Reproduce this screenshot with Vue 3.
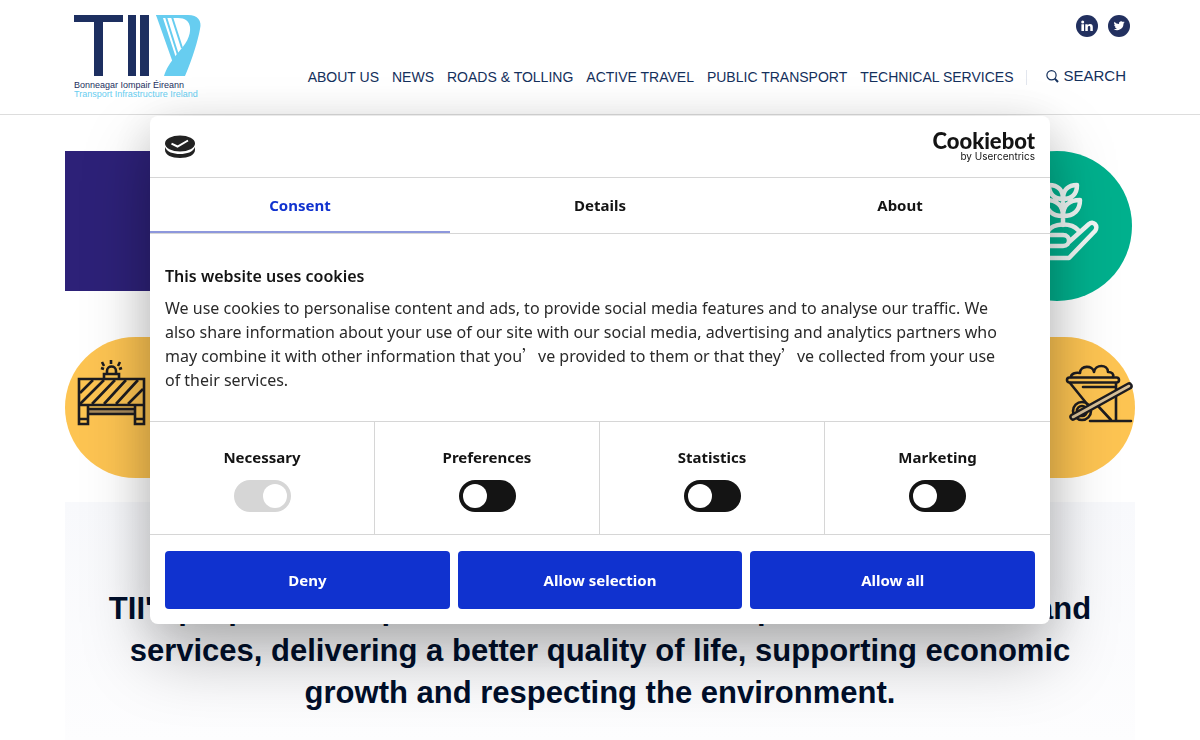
<script setup>
import { ref, reactive } from 'vue'

const links = ['About us', 'News', 'Roads & Tolling', 'Active Travel', 'Public Transport', 'Technical Services']
const tabs = ['Consent', 'Details', 'About']
const activeTab = ref('Consent')
const categories = reactive([
  { id: 'necessary', name: 'Necessary', on: true, locked: true },
  { id: 'preferences', name: 'Preferences', on: false, locked: false },
  { id: 'statistics', name: 'Statistics', on: false, locked: false },
  { id: 'marketing', name: 'Marketing', on: false, locked: false },
])
const actions = ['Deny', 'Allow selection', 'Allow all']
</script>

<template>
  <div class="page">
    <header class="site-header">
      <div class="container header-inner">
        <a href="#" class="logo" aria-label="TII home">
          <svg width="128" height="86" viewBox="0 0 128 86">
            <path fill="#1d2f60" d="M0 0h49v7H29v54h-9V7H0zM54 0h8v61h-8zM66 0h9v61h-9z" />
            <path fill="#67cdf0" d="M82 0H114C124 0 128 6 126 14C124 25 119 42 111 61H90C92 54 96 48 103 39C112 29 117 21 116 12C115 6 111 3 104 3H84z" />
            <path fill="#67cdf0" d="M82 0H88L102 43L99 48z" />
            <path fill="none" stroke="#67cdf0" stroke-width="2" d="M92 2L104 40M98 2L108 33" />
            <text x="0" y="73" font-size="9" fill="#1d2f60">Bonneagar Iompair Éireann</text>
            <text x="0" y="82" font-size="9" fill="#67cdf0">Transport Infrastructure Ireland</text>
          </svg>
        </a>
        <div class="header-right">
          <div class="social">
            <a href="#" aria-label="LinkedIn">
              <svg width="22" height="22" viewBox="0 0 22 22">
                <circle cx="11" cy="11" r="11" fill="#22305f" />
                <circle cx="6.700" cy="7" r="1.500" fill="#fff" />
                <path fill="#fff" d="M5.400 9.300H8V16H5.400zM9.300 9.300h2.400v1c.5-.8 1.300-1.200 2.300-1.200 2 0 2.800 1.200 2.800 3.200V16h-2.500v-3.400c0-1-.3-1.600-1.100-1.600-.9 0-1.400.6-1.400 1.600V16H9.300z" />
              </svg>
            </a>
            <a href="#" aria-label="Twitter">
              <svg width="22" height="22" viewBox="0 0 22 22">
                <circle cx="11" cy="11" r="11" fill="#22305f" />
                <path transform="translate(5.600 5.200) scale(.46)" fill="#fff" d="M24 4.600a10 10 0 0 1-2.800.8 5 5 0 0 0 2.100-2.700 10 10 0 0 1-3.100 1.200 4.900 4.900 0 0 0-8.400 4.500A14 14 0 0 1 1.700 3.200a4.900 4.900 0 0 0 1.500 6.500 5 5 0 0 1-2.200-.6v.1a4.900 4.900 0 0 0 3.900 4.800 5 5 0 0 1-2.200.1 4.900 4.900 0 0 0 4.600 3.400A9.900 9.900 0 0 1 0 19.500 14 14 0 0 0 21.500 7.100 10 10 0 0 0 24 4.600z" />
              </svg>
            </a>
          </div>
          <nav class="nav">
            <a v-for="l in links" :key="l" href="#">{{ l }}</a>
            <button type="button" class="search">
              <svg width="13" height="13" viewBox="0 0 13 13" fill="none" stroke="#14305c">
                <circle cx="5.500" cy="5.200" r="4.600" stroke-width="1.200" />
                <path d="M8.800 8.600L12 12" stroke-width="2" />
              </svg>
              Search
            </button>
          </nav>
        </div>
      </div>
    </header>

    <main class="container main">
      <div class="row first">
        <div class="block"></div>
        <div class="disc">
          <svg width="90" height="84" viewBox="0 0 90 84" fill="none" stroke="#f1f7f5" stroke-width="4.500" stroke-linecap="round" stroke-linejoin="round">
            <path d="M43 44V14M43 18C43 9 48 4 57 4C57 13 52 18 43 18ZM43 18C43 9 38 4 29 4C29 13 34 18 43 18ZM43 35C43 25 49 19 60 19C60 29 54 35 43 35ZM43 35C43 25 37 19 26 19C26 29 32 35 43 35Z" />
            <path d="M28 50C33 42 51 41 58 49" />
            <path d="M10 62L22 54H43C51 54 51 65 43 65H24M49 61L69 43C73 39 79 45 75 50L49 77H10" />
          </svg>
        </div>
      </div>
      <div class="row">
        <div class="pill left">
          <svg width="70" height="68" viewBox="0 0 70 68" fill="none" stroke="#1d1c20" stroke-width="2.600">
            <path fill="#a98b5c" stroke="none" d="M11 51h46v4H11z" />
            <path d="M2 20H67V46H2zM2 46h9v19H2zM58 46h9v19h-9zM2 60h9M58 60h9M11 50h47M11 55h47M27 20v-5h15v5M30 15v-3c0-6 9-6 9 0v3M34 1v4M25 3l2 4M43 3l-2 4M24 9l3 1M45 9l-3 1" />
            <path d="M3 34L16 21M3 45L27 21M15 45L38 21M27 45L49 21M39 45L61 21M51 45L66 30" />
          </svg>
        </div>
        <div class="pill right">
          <svg width="70" height="62" viewBox="0 0 70 62" fill="none" stroke="#1d1c20" stroke-width="2.600" stroke-linecap="round" stroke-linejoin="round">
            <path d="M6 13C6 10 10 8 15 9C15 1 28 1 29 8C30 0 43 0 43 8C47 8 49 10 48 13" />
            <rect x="2" y="13.500" width="52" height="5" rx="2.500" />
            <path d="M5 19L22 40M51 19V56M18 23H51M33 42L46 56M25 57H66" />
            <circle cx="17" cy="47" r="9" />
            <circle cx="17" cy="47" r="5" />
            <path stroke-width="7.500" d="M8 53L64 22" />
            <path stroke="#d8c097" d="M8 53L64 22" />
          </svg>
        </div>
      </div>
      <section class="purpose">
        <h2>TII's purpose is to provide sustainable transport infrastructure and services, delivering a better quality of life, supporting economic growth and respecting the environment.</h2>
      </section>
    </main>

    <div class="overlay">
      <div class="dialog" role="dialog" aria-labelledby="cookie-title">
        <div class="dialog-head">
          <svg width="30" height="24" viewBox="0 0 30 24">
            <path fill="#222" d="M0 12c2 5 8 7 15 7S28 17 30 12v3c0 5-6.700 8-15 8S0 20 0 15z" />
            <ellipse cx="15" cy="8.500" rx="15" ry="8" fill="#222" />
            <path fill="none" stroke="#fff" stroke-width="2" d="M6.500 8.700L12.500 11.500L23 5.500" />
          </svg>
          <a href="#" class="brand">
            <span class="brand-name">Cookiebot</span>
            <span class="brand-by">by Usercentrics</span>
          </a>
        </div>
        <div class="tabs" role="tablist">
          <button v-for="t in tabs" :key="t" type="button" role="tab" :aria-selected="t === activeTab" :class="{ active: t === activeTab }" @click="activeTab = t">{{ t }}</button>
        </div>
        <div class="copy">
          <h3 id="cookie-title">This website uses cookies</h3>
          <p>We use cookies to personalise content and ads, to provide social media features and to analyse our traffic. We also share information about your use of our site with our social media, advertising and analytics partners who may combine it with other information that you<span class="wide" lang="zh-CN">’</span>ve provided to them or that they<span class="wide" lang="zh-CN">’</span>ve collected from your use of their services.</p>
        </div>
        <div class="categories">
          <div v-for="c in categories" :key="c.id" class="category">
            <label :for="c.id">{{ c.name }}</label>
            <input :id="c.id" v-model="c.on" type="checkbox" :disabled="c.locked" />
          </div>
        </div>
        <div class="actions">
          <button v-for="a in actions" :key="a" type="button">{{ a }}</button>
        </div>
      </div>
    </div>
  </div>
</template>

<style>
html, body { background: #fff; }
body { overflow: hidden; }
</style>

<style scoped>
* { box-sizing: border-box; }
.page { font-family: "Liberation Sans", Arial, sans-serif; color: #000f2b; }
a { color: inherit; text-decoration: none; }
button { font: inherit; border: 0; background: none; padding: 0; cursor: pointer; }
svg { display: block; }
.container { max-width: 1070px; margin: 0 auto; }
.site-header { border-bottom: 1px solid #ddd; }
.header-inner { display: flex; justify-content: space-between; padding: 15px 9px 13px; }
.header-right { display: flex; flex-direction: column; align-items: flex-end; gap: 30px; }
.social { display: flex; gap: 10px; margin-right: -4px; }
.nav { display: flex; align-items: center; gap: 13px; font-size: 14px; line-height: 20px; text-transform: uppercase; color: #14305c; white-space: nowrap; }
.search { display: flex; align-items: center; gap: 4px; font-size: 15px; line-height: 12px; text-transform: uppercase; color: #14305c; border-left: 1px solid #e2e6ee; padding: 0 0 2px 19px; }
.main { padding-top: 36px; }
.row { display: flex; justify-content: space-between; align-items: flex-start; }
.first { margin-bottom: 36px; }
.block { width: 140px; height: 140px; background: #2d2178; }
.disc { width: 150px; height: 150px; border-radius: 50%; background: #00b08d; margin-right: 3px; padding: 30px 0 0 38px; }
.pill { width: 180px; height: 141px; border-radius: 71px; background: #fdc452; }
.left { padding: 22px 0 0 12px; }
.right { display: flex; justify-content: flex-end; padding: 27px 0 0; }
.purpose { margin-top: 24px; min-height: 240px; background: linear-gradient(#f8f9fc, #fdfdfe); padding: 86px 40px 24px; }
h2 { margin: 0; font-size: 31px; line-height: 42px; text-align: center; }

.overlay { position: fixed; inset: 0; display: flex; align-items: center; justify-content: center; }
.dialog { width: 75%; max-width: 900px; background: #fff; border-radius: 8px; box-shadow: 0 32px 68px rgba(0, 0, 0, .26), 0 8px 48px rgba(0, 0, 0, .12); font-family: "Noto Sans", "Open Sans", sans-serif; color: #141414; }
.dialog-head { display: flex; justify-content: space-between; align-items: center; height: 62px; padding: 0 15px; border-bottom: 1px solid #d6d6d6; }
.brand { display: flex; flex-direction: column; align-items: flex-end; padding-bottom: 2px; }
.brand-name { font: 900 22px/20px Lato, sans-serif; }
.brand-by { font: 10px/10px Inter, sans-serif; }
.tabs { display: flex; border-bottom: 1px solid #d6d6d6; }
.tabs button { flex: 1; font-size: 15px; font-weight: 700; line-height: 24px; padding: 15px 0 14px; border-bottom: 2px solid transparent; color: #141414; }
.tabs .active { color: #1032cf; border-color: #8d97dc; }
.copy { padding: 30px 32px 29px 15px; }
h3 { margin: 0 0 8px; font-size: 16px; font-weight: 600; line-height: 24px; }
p { margin: 0; padding-right: 15px; font-size: 16px; line-height: 24px; color: #2a2a2a; }
.wide { font-family: "Noto Sans CJK SC", sans-serif; line-height: 1; }
.categories { display: grid; grid-template-columns: repeat(4, 1fr); border-top: 1px solid #d6d6d6; border-bottom: 1px solid #d6d6d6; }
.category { display: flex; flex-direction: column; align-items: center; gap: 11px; padding: 23px 0 22px; border-right: 1px solid #d6d6d6; }
.category:last-child { border-right: 0; }
.category label { font-size: 15px; font-weight: 700; line-height: 24px; }
.category input { appearance: none; margin: 0; width: 57px; height: 32px; border-radius: 16px; background: #141414; padding: 4px; display: flex; }
.category input::before { content: ""; width: 24px; height: 24px; border-radius: 50%; background: #fff; }
.category input:checked { background: #1032cf; justify-content: flex-end; }
.category input:disabled { background: #d6d6d6; }
.actions { display: flex; gap: 8px; padding: 16px 15px 15px; }
.actions button { flex: 1; height: 58px; border-radius: 4px; background: #1032cf; color: #fff; font-size: 15px; font-weight: 700; }
</style>
